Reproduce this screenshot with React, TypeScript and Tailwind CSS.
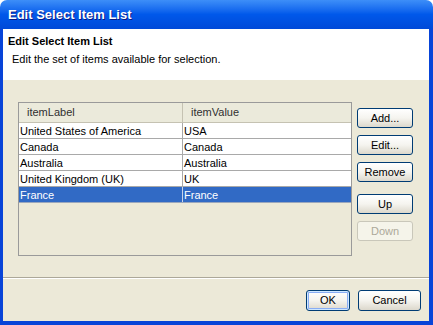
import React from "react";

const rows = [
  ["United States of America", "USA"],
  ["Canada", "Canada"],
  ["Australia", "Australia"],
  ["United Kingdom (UK)", "UK"],
  ["France", "France"],
];

function XpButton({
  label,
  disabled,
  isDefault,
  className = "",
}: {
  label: string;
  disabled?: boolean;
  isDefault?: boolean;
  className?: string;
}) {
  const base =
    "flex items-center justify-center rounded-[3px] border text-[11px] leading-none";
  const look = disabled
    ? "border-[#c9c7ba] bg-[#f5f4ea] text-[#aca899]"
    : "border-[#003c74] bg-gradient-to-b from-[#ffffff] via-[#f5f4ef] to-[#dcd8cc] text-black";
  const ring = isDefault
    ? "shadow-[inset_0_0_0_1px_#cee7ff,inset_0_0_0_2px_#89adf4]"
    : "";
  return (
    <button className={`${base} ${look} ${ring} ${className}`} disabled={disabled}>
      {label}
    </button>
  );
}

export default function App() {
  return (
    <div
      className="flex h-[325px] w-[433px] flex-col overflow-hidden"
      style={{ fontFamily: '"Liberation Sans", Arial, sans-serif' }}
    >
      {/* title bar */}
      <div className="flex h-[29px] shrink-0 items-center rounded-t-[7px] bg-gradient-to-b from-[#3d8ef8] via-[#0058ea] to-[#0049d8] pl-[8px]">
        <span className="text-[13px] font-bold text-white [text-shadow:1px_1px_0_#0a1883]">
          Edit Select Item List
        </span>
      </div>

      <div className="flex flex-1 flex-col border-b-[4px] border-l-[3px] border-r-[4px] border-[#0844d8] bg-[#ece9d8]">
        {/* title area */}
        <div className="h-[51px] shrink-0 bg-white pl-[5px] pt-[5px]">
          <div className="text-[11px] font-bold leading-[14px] text-black">
            Edit Select Item List
          </div>
          <div className="mt-[4px] pl-[4px] text-[11px] leading-[14px] text-black">
            Edit the set of items available for selection.
          </div>
        </div>

        {/* content */}
        <div className="flex h-[197px] shrink-0 pl-[15px] pt-[22px]">
          <div className="flex h-[154px] w-[334px] flex-col border border-[#9a9a9a] text-[11px]">
            <div className="flex h-[20px] shrink-0 border-b border-[#c5c2b2] bg-[#ebeadb]">
              <div className="flex w-[164px] items-center border-r border-[#c5c2b2] pl-[8px] text-[#303030]">
                itemLabel
              </div>
              <div className="flex flex-1 items-center pl-[8px] text-[#303030]">itemValue</div>
            </div>
            {rows.map(([label, value], i) => {
              const selected = i === rows.length - 1;
              return (
                <div
                  key={label}
                  className={`flex h-[16px] shrink-0 border-b ${
                    selected
                      ? "border-[#9aa7bd] bg-[#316ac5] text-white"
                      : "border-[#a9a9a9] bg-white text-black"
                  }`}
                >
                  <div
                    className={`flex w-[164px] items-center border-r pl-[1px] pt-[1px] ${
                      selected ? "border-[#c6d3ea]" : "border-[#a9a9a9]"
                    }`}
                  >
                    {label}
                  </div>
                  <div className="flex flex-1 items-center pl-[1px] pt-[1px]">{value}</div>
                </div>
              );
            })}
          </div>

          <div className="ml-[5px] mt-[6px] flex flex-col">
            <XpButton label="Add..." className="h-[20px] w-[56px]" />
            <XpButton label="Edit..." className="mt-[7px] h-[20px] w-[56px]" />
            <XpButton label="Remove" className="mt-[7px] h-[20px] w-[56px]" />
            <XpButton label="Up" className="mt-[12px] h-[20px] w-[56px]" />
            <XpButton label="Down" disabled className="mt-[7px] h-[20px] w-[56px]" />
          </div>
        </div>

        {/* separator */}
        <div className="h-[2px] shrink-0 border-t border-[#aca899] bg-white" />

        {/* footer */}
        <div className="flex justify-end gap-[8px] pr-[8px] pt-[11px]">
          <XpButton label="OK" isDefault className="h-[21px] w-[44px]" />
          <XpButton label="Cancel" className="h-[21px] w-[63px]" />
        </div>
      </div>
    </div>
  );
}
